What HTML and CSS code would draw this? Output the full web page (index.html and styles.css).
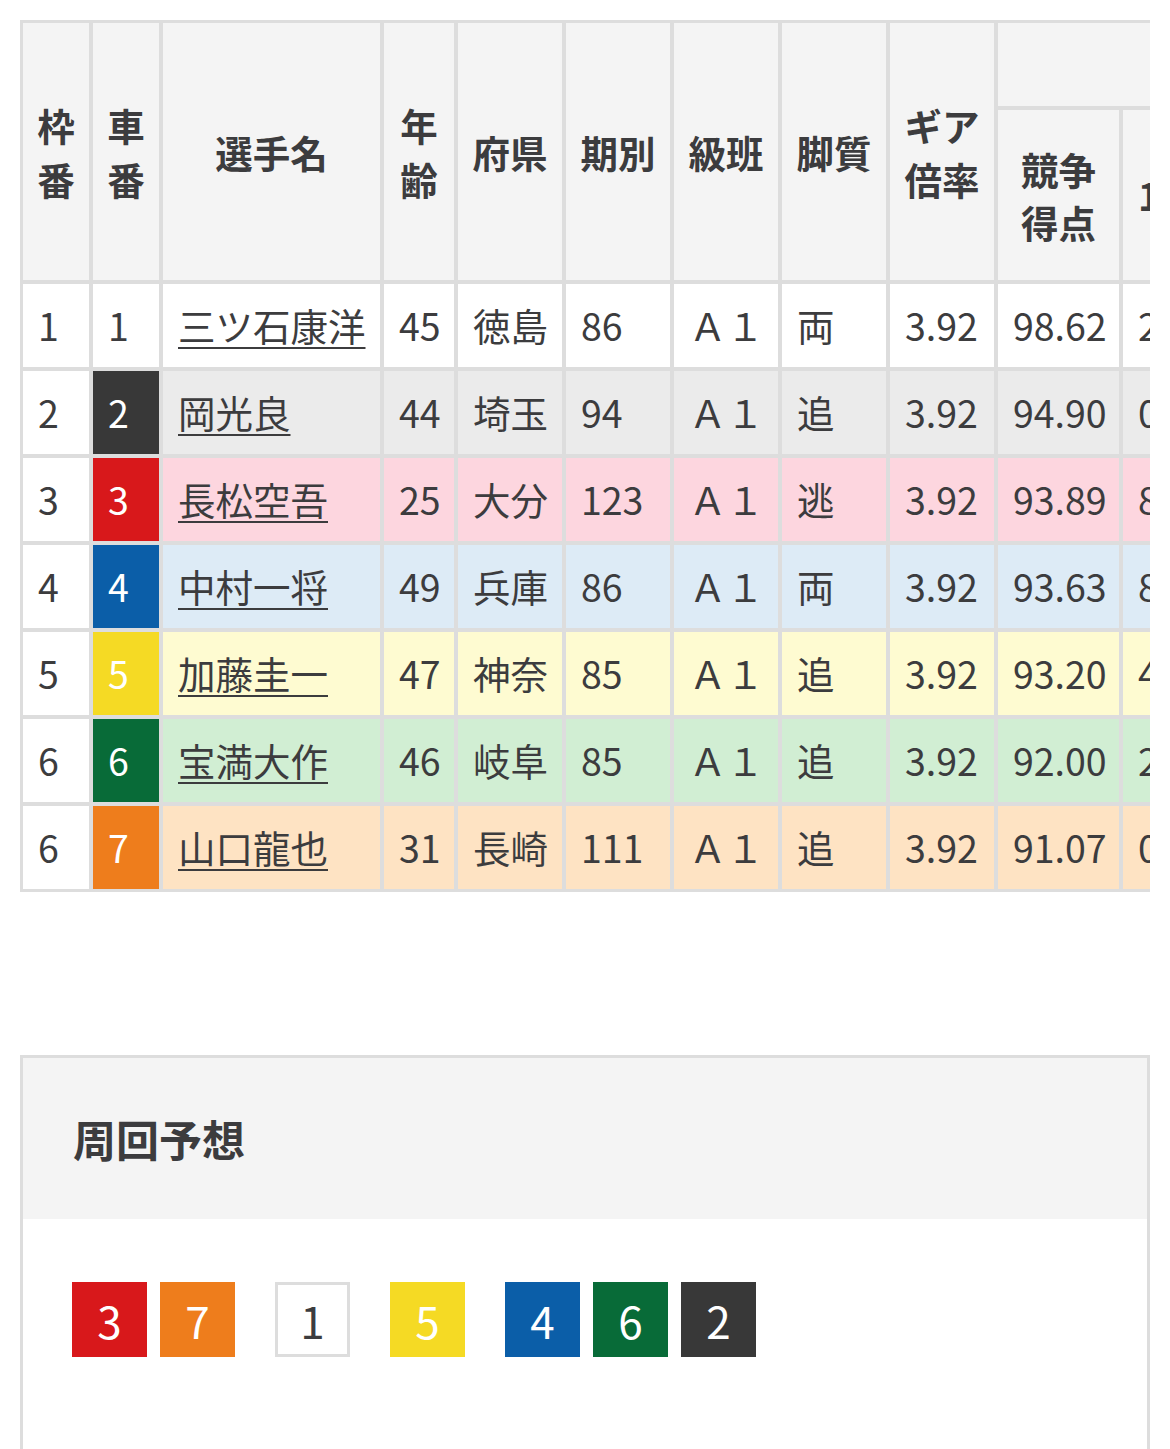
FILE: index.html
```html
<!DOCTYPE html>
<html lang="ja">
<head>
<meta charset="utf-8">
<title>出走表</title>
<link rel="stylesheet" href="styles.css">
</head>
<body>
<div class="page">
  <div class="table-scroll">
    <table class="entry">
      <colgroup>
        <col class="c-waku"><col class="c-sha"><col class="c-name"><col class="c-age">
        <col class="c-std"><col class="c-std"><col class="c-std"><col class="c-std"><col class="c-std">
        <col class="c-score"><col class="c-more">
      </colgroup>
      <thead>
        <tr>
          <th rowspan="2">枠<br>番</th>
          <th rowspan="2">車<br>番</th>
          <th rowspan="2">選手名</th>
          <th rowspan="2">年<br>齢</th>
          <th rowspan="2">府県</th>
          <th rowspan="2">期別</th>
          <th rowspan="2">級班</th>
          <th rowspan="2">脚質</th>
          <th rowspan="2">ギア<br>倍率</th>
          <th colspan="2" class="group"></th>
        </tr>
        <tr>
          <th class="sub">競争<br>得点</th>
          <th class="sub more">1着</th>
        </tr>
      </thead>
      <tbody>
        <tr class="r1">
          <td class="waku">1</td><td class="sha s1">1</td><td><a href="#">三ツ石康洋</a></td><td>45</td><td>徳島</td><td>86</td><td>Ａ１</td><td>両</td><td>3.92</td><td>98.62</td><td>2</td>
        </tr>
        <tr class="r2">
          <td class="waku">2</td><td class="sha s2">2</td><td><a href="#">岡光良</a></td><td>44</td><td>埼玉</td><td>94</td><td>Ａ１</td><td>追</td><td>3.92</td><td>94.90</td><td>0</td>
        </tr>
        <tr class="r3">
          <td class="waku">3</td><td class="sha s3">3</td><td><a href="#">長松空吾</a></td><td>25</td><td>大分</td><td>123</td><td>Ａ１</td><td>逃</td><td>3.92</td><td>93.89</td><td>8</td>
        </tr>
        <tr class="r4">
          <td class="waku">4</td><td class="sha s4">4</td><td><a href="#">中村一将</a></td><td>49</td><td>兵庫</td><td>86</td><td>Ａ１</td><td>両</td><td>3.92</td><td>93.63</td><td>8</td>
        </tr>
        <tr class="r5">
          <td class="waku">5</td><td class="sha s5">5</td><td><a href="#">加藤圭一</a></td><td>47</td><td>神奈</td><td>85</td><td>Ａ１</td><td>追</td><td>3.92</td><td>93.20</td><td>4</td>
        </tr>
        <tr class="r6">
          <td class="waku">6</td><td class="sha s6">6</td><td><a href="#">宝満大作</a></td><td>46</td><td>岐阜</td><td>85</td><td>Ａ１</td><td>追</td><td>3.92</td><td>92.00</td><td>2</td>
        </tr>
        <tr class="r7">
          <td class="waku">6</td><td class="sha s7">7</td><td><a href="#">山口龍也</a></td><td>31</td><td>長崎</td><td>111</td><td>Ａ１</td><td>追</td><td>3.92</td><td>91.07</td><td>0</td>
        </tr>
      </tbody>
    </table>
  </div>

  <section class="lap">
    <h2 class="lap-title">周回予想</h2>
    <div class="lap-body">
      <div class="lap-group">
        <span class="chip s3">3</span><span class="chip s7">7</span>
      </div>
      <div class="lap-group">
        <span class="chip s1">1</span>
      </div>
      <div class="lap-group">
        <span class="chip s5">5</span>
      </div>
      <div class="lap-group">
        <span class="chip s4">4</span><span class="chip s6">6</span><span class="chip s2">2</span>
      </div>
    </div>
  </section>
</div>
</body>
</html>
```

FILE: styles.css
```css
* { box-sizing: border-box; }

html, body {
  margin: 0;
  padding: 0;
  background: #fff;
}

body {
  font-family: "Noto Sans CJK JP", "Noto Sans", sans-serif;
  color: #3c3c3e;
  font-size: 37.5px;
}

.page {
  padding: 20px 20px 0 20px;
  width: 1170px;
}

.table-scroll {
  width: 1130px;
  overflow: hidden;
}

.entry {
  border-collapse: separate;
  border-spacing: 0;
  border: 1px solid #dddddd;
  table-layout: fixed;
  width: 1210px;
}

.c-waku, .c-sha { width: 70px; }
.c-name { width: 221px; }
.c-age { width: 74px; }
.c-std { width: 108px; }
.c-score { width: 125px; }
.c-more { width: 108px; }

.entry th,
.entry td {
  border: 2px solid #dddddd;
  white-space: nowrap;
  overflow: hidden;
}

.entry th {
  background: #f4f4f4;
  font-weight: 700;
  text-align: center;
  line-height: 1.42;
  padding: 0 2px;
  vertical-align: middle;
}

.entry th.group { height: 87px; }
.entry th.sub { height: 174px; }
.entry th.more { text-align: left; padding-left: 15px; }

.entry td {
  height: 87px;
  padding: 0 15px;
  text-align: left;
  vertical-align: middle;
  font-weight: 400;
  line-height: 1.5;
}

.entry td a {
  color: inherit;
  text-decoration: underline;
  text-decoration-thickness: 2px;
  text-underline-offset: 6px;
}

.r1 td { background: #ffffff; }
.r2 td { background: #ebebeb; }
.r3 td { background: #fdd6df; }
.r4 td { background: #ddebf6; }
.r5 td { background: #fefbd1; }
.r6 td { background: #d1eed3; }
.r7 td { background: #fee3c3; }

.entry td.waku { background: #fff; }

.s1 { background: #fff; color: #3c3c3e; }
.s2 { background: #383838; color: #fff; }
.s3 { background: #d8181b; color: #fff; }
.s4 { background: #0b5ea8; color: #fff; }
.s5 { background: #f5da24; color: #fff; }
.s6 { background: #086b38; color: #fff; }
.s7 { background: #ee7d1c; color: #fff; }

.entry td.sha.s1 { background: #fff; }
.entry td.sha.s2 { background: #383838; }
.entry td.sha.s3 { background: #d8181b; }
.entry td.sha.s4 { background: #0b5ea8; }
.entry td.sha.s5 { background: #f5da24; }
.entry td.sha.s6 { background: #086b38; }
.entry td.sha.s7 { background: #ee7d1c; }

.lap {
  margin-top: 163px;
  width: 1130px;
  border: 3px solid #dddddd;
  border-bottom: 0;
}

.lap-title {
  margin: 0;
  background: #f4f4f4;
  height: 161px;
  display: flex;
  align-items: center;
  padding: 0 50px;
  font-size: 43px;
  font-weight: 700;
  line-height: 1;
}

.lap-body {
  display: flex;
  gap: 40px;
  padding: 63px 49px 120px;
}

.lap-group {
  display: flex;
  gap: 13px;
}

.chip {
  width: 75px;
  height: 75px;
  display: flex;
  align-items: center;
  justify-content: center;
  font-size: 44px;
  line-height: 1;
}

.chip.s1 { border: 3px solid #dddddd; }
```
